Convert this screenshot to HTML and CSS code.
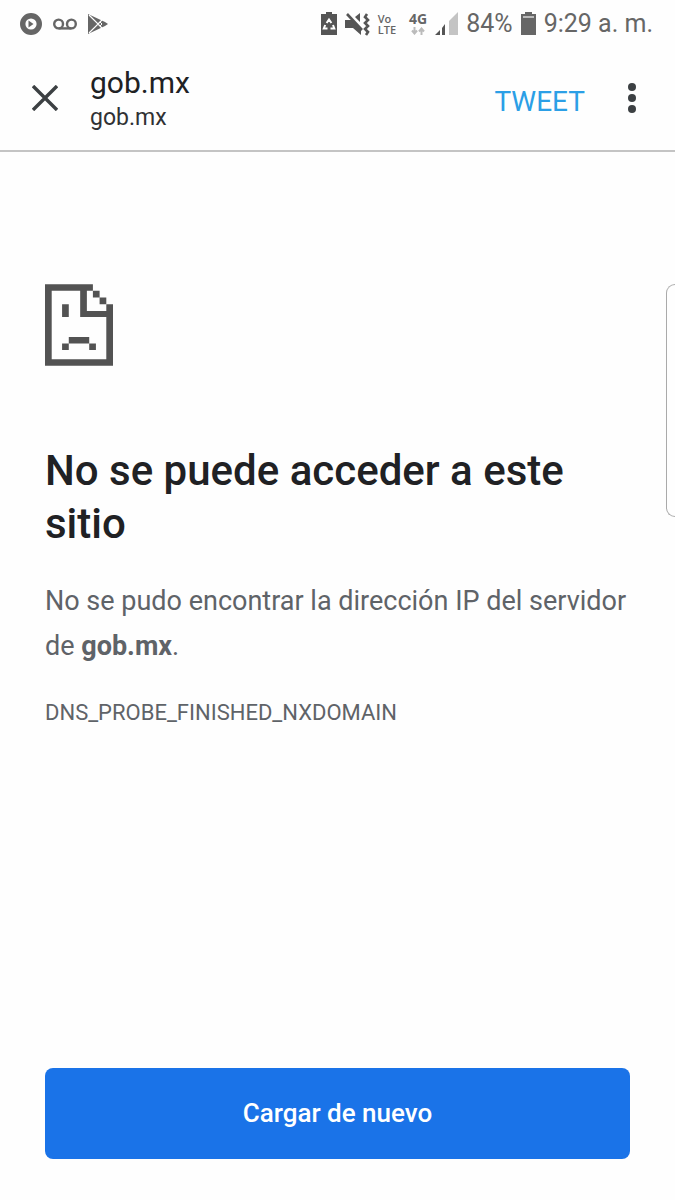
FILE: index.html
```html
<!DOCTYPE html>
<html lang="es">

<head>
    <meta charset="UTF-8">
    <meta name="viewport" content="width=device-width, initial-scale=1.0">
    <title>gob.mx</title>

    <link rel="stylesheet" href="styles.css">
</head>

<body>
    <div class="status">
        <div class="group notifications">
            <svg width="24" height="24" viewBox="0 0 24 24">
                <circle cx="12" cy="12" r="8.3" fill="none" stroke="#666" stroke-width="5.4" />
                <path d="M9.5 8.5v7l5-3.5z" fill="#666" />
            </svg>
            <svg width="24" height="12" viewBox="0 0 24 12" fill="none" stroke="#666" stroke-width="2.4">
                <circle cx="5.6" cy="6" r="4.4" />
                <circle cx="18.4" cy="6" r="4.4" />
                <path d="M5.6 10.4h12.8" />
            </svg>
            <svg width="22" height="22" viewBox="0 0 22 22">
                <path d="M1 1l17 8 3 2-3 2-17 8z" fill="#666" />
                <path d="M2 2l9 9 4-4M2 20l9-9 4 4" fill="none" stroke="#fefefe" stroke-width="1.2" />
                <path d="M13 9l2 2-2 2 2 2M13 9l2-2" fill="none" stroke="#fefefe" />
            </svg>
        </div>
        <div class="group signals">
            <svg width="16" height="23" viewBox="0 0 16 23">
                <path d="M5 0h6v2h5v21H0V2h5z" fill="#555" />
                <path d="M5.6 11L8 7.5l2.4 3.5M12 13l1.3 3.5H9.5M6.5 16.5H2.8L4.2 13" fill="none" stroke="#fff" stroke-width="2" />
            </svg>
            <svg width="25" height="24" viewBox="0 0 25 24">
                <path d="M0 8h7l9 9v6l-8-7H0zM10 5l5-4v9z" fill="#555" />
                <path d="M2 2l15 16" stroke="#555" stroke-width="2.6" />
                <path d="M22 2l-2 3 3 3-3 3 3 3-3 3 3 3-2 3" fill="none" stroke="#555" stroke-width="2.6" />
            </svg>
            <div class="volte">
                <div>Vo</div>
                <div>LTE</div>
            </div>
            <div class="network">
                <div>4G</div>
                <svg width="14" height="8" viewBox="0 0 14 8" fill="none" stroke="#bbb" stroke-width="2">
                    <path d="M3.5 0v6M1 3.5l2.5 3 2.5-3M10.5 8V2M8 4.5l2.5-3 2.5 3" />
                </svg>
            </div>
            <svg width="23" height="23" viewBox="0 0 23 23">
                <path d="M0 23l5-5v5zM7 23v-7l3-4v11z" fill="#555" />
                <path d="M14 23V9l9-9v23z" fill="#c4c4c4" />
            </svg>
            <span class="percent">84%</span>
            <svg width="15" height="23" viewBox="0 0 15 23">
                <path d="M4 0h7v2h4v21H0V2h4z" fill="#666" />
                <path d="M2 4h11v2H2z" fill="#bbb" />
            </svg>
            <span class="time">9:29 a. m.</span>
        </div>
    </div>

    <header class="toolbar">
        <button class="close" aria-label="Cerrar">
            <svg width="26" height="26" viewBox="0 0 26 26">
                <path d="M1 1l24 24M25 1L1 25" stroke="#3c4043" stroke-width="3.4" />
            </svg>
        </button>
        <div class="page-name">
            <div class="title">gob.mx</div>
            <div class="url">gob.mx</div>
        </div>
        <button class="tweet">TWEET</button>
        <button class="menu" aria-label="Menú">
            <svg width="8" height="30" viewBox="0 0 8 30" fill="#3c4043">
                <circle cx="4" cy="4" r="4" />
                <circle cx="4" cy="15" r="4" />
                <circle cx="4" cy="26" r="4" />
            </svg>
        </button>
    </header>

    <main class="error">
        <svg width="68" height="82" viewBox="0 0 203 244" fill="#535353">
            <path d="M0 0h143v20H125v60h58V60h20v184H0zM20 20v204h163V98H105V20z" fill-rule="evenodd" />
            <path d="M143 20h20v20h-20zM163 40h20v20h-20zM51 60h20v38H51zM71 158h61v19H71zM51 177h20v20H51zM132 177h20v20h-20z" />
        </svg>
        <h1>No se puede acceder a este sitio</h1>
        <p class="summary">No se pudo encontrar la dirección IP del servidor de <strong>gob.mx</strong>.</p>
        <p class="code">DNS_PROBE_FINISHED_NXDOMAIN</p>
        <button class="reload">Cargar de nuevo</button>
    </main>

    <!-- edge panel handle -->
    <div class="edge-handle"></div>
</body>

</html>
```

FILE: styles.css
```css
* {
    box-sizing: border-box;
}

body {
    display: flex;
    flex-direction: column;
    min-height: 100vh;
    margin: 0;
    background: #fefefe;
    font-family: Roboto, sans-serif;
    overflow-x: hidden;
}

button {
    margin: 0;
    padding: 0;
    border: 0;
    background: none;
    font-family: inherit;
    cursor: pointer;
}

svg {
    display: block;
    flex: none;
}

.status {
    display: flex;
    justify-content: space-between;
    height: 48px;
    padding: 0 22px 1px 19px;
    color: #666;
}

.group {
    display: flex;
    align-items: center;
}

.notifications {
    gap: 10px;
}

.signals {
    gap: 8px;
    white-space: nowrap;
}

.volte {
    font: 600 11px/11px "Open Sans", sans-serif;
}

.network {
    display: flex;
    flex-direction: column;
    align-items: center;
    gap: 1px;
    margin-left: 5px;
    font: bold 14px/14px "Open Sans", sans-serif;
}

.percent,
.time {
    font-size: 25px;
}

.toolbar {
    display: flex;
    align-items: center;
    height: 104px;
    padding: 0 39px 2px 32px;
    border-bottom: 2px solid #c4c4c4;
}

.page-name {
    flex: 1;
    padding-top: 4px;
    margin-left: 32px;
}

.title {
    color: #202124;
    font-size: 30px;
    line-height: 36px;
}

.url {
    color: #303134;
    font-size: 23px;
    line-height: 34px;
}

.tweet {
    padding-top: 6px;
    color: #2b9fe6;
    font-size: 28px;
}

.menu {
    margin-left: 43px;
}

.error {
    display: flex;
    flex: 1;
    flex-direction: column;
    padding: 132px 45px 41px;
    color: #5f6368;
}

h1 {
    margin: 78px 0 29px;
    color: #202124;
    font-size: 42px;
    font-weight: 500;
    line-height: 53px;
}

p {
    margin: 0;
}

.summary {
    font-size: 27px;
    line-height: 45px;
}

.code {
    margin-top: 27px;
    font-size: 22px;
    line-height: 34px;
}

.reload {
    height: 91px;
    padding-bottom: 2px;
    margin-top: auto;
    border-radius: 8px;
    background: #1a73e8;
    color: #fff;
    font-size: 26px;
    font-weight: 500;
}

.edge-handle {
    position: absolute;
    top: 284px;
    right: 0;
    width: 9px;
    height: 233px;
    border: 1px solid #aaa;
    border-right: 0;
    border-radius: 10px 0 0 10px;
}
```
